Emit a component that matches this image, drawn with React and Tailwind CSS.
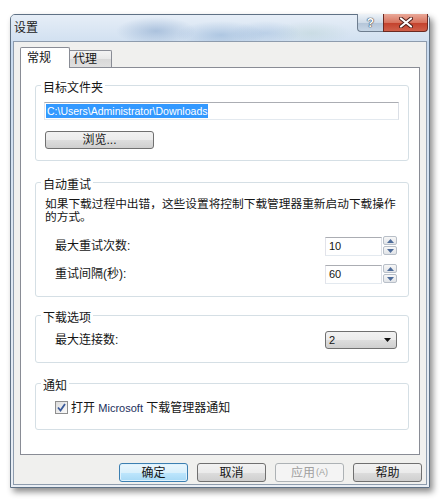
import React from "react";

function Group({ label, className, children }) {
  return (
    <div className={"w-[374px] border border-[#d5dfe5] rounded-[3px] px-[8px] " + className}>
      <div className="-mt-[5px] -ml-[3px] w-fit bg-white px-[2px] leading-[14px]">{label}</div>
      {children}
    </div>
  );
}

function Arrow({ up }) {
  return (
    <svg width="7" height="4" viewBox="0 0 7 4">
      {up ? <path d="M0 4 L3.5 0 L7 4 Z" fill="#4e6c9a" /> : <path d="M0 0 L3.5 4 L7 0 Z" fill="#4e6c9a" />}
    </svg>
  );
}

function Spin({ value }) {
  return (
    <div className="flex items-start h-[20px]">
      <div className="w-[57px] h-[19px] mt-[1px] border border-[#abadb3] border-b-[#e3e9ef] border-l-[#e2e3ea] border-r-[#dbdfe6] bg-white pl-[3px] flex items-center text-[11px] leading-none">
        {value}
      </div>
      <div className="ml-[1px] w-[14px] flex flex-col gap-px">
        <div className="h-[9px] border border-[#b8bfc8] rounded-[2px] bg-[linear-gradient(to_bottom,#f7f7f7,#e1e4e8)] flex items-center justify-center">
          <Arrow up />
        </div>
        <div className="h-[9px] border border-[#b8bfc8] rounded-[2px] bg-[linear-gradient(to_bottom,#f7f7f7,#e1e4e8)] flex items-center justify-center">
          <Arrow />
        </div>
      </div>
    </div>
  );
}

const btn =
  "w-[69px] h-[19px] rounded-[3px] border flex items-center justify-center leading-none text-[12px]";

export default function App() {
  return (
    <div className="w-[443px] h-[500px] bg-white pt-[14px] pl-[10px] font-['Liberation_Sans','Noto_Sans_CJK_SC',sans-serif] text-[12px] text-[#151515]">
      <div className="w-[420px] h-[474px] border border-[#5f7185] rounded-t-[5px] bg-[linear-gradient(to_bottom,#c4d8ee,#dbe6f2_45%,#e9eef4)] shadow-[3px_4px_6px_rgba(0,0,0,0.45)] flex flex-col">
        {/* title bar */}
        <div className="h-[26px] shrink-0 flex items-start justify-between rounded-t-[4px] bg-[radial-gradient(ellipse_40px_14px_at_145px_16px,rgba(95,135,185,0.38),transparent),radial-gradient(ellipse_45px_14px_at_210px_20px,rgba(100,145,195,0.35),transparent),radial-gradient(ellipse_35px_12px_at_255px_18px,rgba(120,160,205,0.3),transparent),radial-gradient(ellipse_40px_12px_at_300px_18px,rgba(160,195,185,0.25),transparent),linear-gradient(to_bottom,#e6eef7,#d2e1f1)]">
          <div className="pl-[3px] pt-[6px] leading-[14px] text-[12px] text-[#222]">设置</div>
          <div className="flex mr-[1px] -mt-[1px]">
            <div className="w-[26px] h-[18px] border border-[#6e7d8f] border-t-0 border-r-0 rounded-bl-[4px] bg-[linear-gradient(to_bottom,#eef3f8,#cfdbe8_50%,#b3c4d7_51%,#c7d6e6)] flex items-center justify-center">
              <span className="text-[12px] font-bold text-white leading-none [text-shadow:0_0_1px_#34404f,0_0_1px_#34404f,0_0_1px_#34404f]">?</span>
            </div>
            <div className="w-[45px] h-[18px] border border-[#6b2a22] border-t-0 rounded-br-[4px] bg-[linear-gradient(to_bottom,#e9a898,#d8745f_50%,#c3402b_51%,#d0604a)] flex items-center justify-center">
              <svg width="14" height="11" viewBox="0 0 14 11">
                <path d="M2 1.5 L12 9.5 M12 1.5 L2 9.5" stroke="#4a1d18" strokeWidth="4" strokeLinecap="round" />
                <path d="M2 1.5 L12 9.5 M12 1.5 L2 9.5" stroke="#ffffff" strokeWidth="2.2" strokeLinecap="round" />
              </svg>
            </div>
          </div>
        </div>

        {/* client */}
        <div className="mx-[2px] w-[414px] h-[444px] shrink-0 border border-[#8e9cad] bg-[#f0f0ee] pt-[5px] flex flex-col">
          {/* tabs */}
          <div className="ml-[6px] h-[20px] flex items-end">
            <div className="relative z-10 w-[50px] h-[21px] -mb-[1px] bg-white border border-b-0 border-[#898c95] rounded-t-[2px] pl-[6px] pt-[3px] leading-[14px]">
              常规
            </div>
            <div className="w-[42px] h-[17px] border border-b-0 border-l-0 border-[#898c95] rounded-tr-[2px] bg-[linear-gradient(to_bottom,#f3f3f3,#e8e8e8_50%,#d8d8d8_51%,#e0e0e0)] pl-[3px] pt-[1px] leading-[14px]">
              代理
            </div>
          </div>

          {/* panel */}
          <div className="ml-[6px] w-[400px] h-[388px] shrink-0 border border-[#898c95] bg-white pt-[17px] pl-[14px]">
            <Group label="目标文件夹" className="pb-[11px]">
              <div className="mt-[7px] w-[355px] h-[18px] border border-[#abadb3] border-b-[#e3e9ef] border-l-[#e2e3ea] border-r-[#dbdfe6] bg-white flex items-center pl-[1px]">
                <span className="bg-[#3399ff] text-white text-[10.5px] leading-[14px] px-[1px]">
                  C:\Users\Administrator\Downloads
                </span>
              </div>
              <div className="mt-[11px] ml-[1px] w-[109px] h-[18px] rounded-[3px] border border-[#707070] bg-[linear-gradient(to_bottom,#f2f2f2_0%,#ebebeb_50%,#dddddd_51%,#cfcfcf_100%)] flex items-center justify-center leading-none">
                浏览...
              </div>
            </Group>

            <Group label="自动重试" className="mt-[21px] pb-[12px]">
              <div className="mt-[5px] text-[11.7px] leading-[13px] pl-[1px] whitespace-nowrap">
                如果下载过程中出错，这些设置将控制下载管理器重新启动下载操作
                <br />
                的方式。
              </div>
              <div className="mt-[13px] h-[20px] flex items-center justify-between pl-[11px] pr-[3px]">
                <span className="leading-[14px]">最大重试次数:</span>
                <Spin value="10" />
              </div>
              <div className="mt-[8px] h-[20px] flex items-center justify-between pl-[11px] pr-[3px]">
                <span className="leading-[14px]">重试间隔(秒):</span>
                <Spin value="60" />
              </div>
            </Group>

            <Group label="下载选项" className="mt-[18px] pb-[13px]">
              <div className="mt-[6px] h-[18px] flex items-center justify-between pl-[11px] pr-[3px]">
                <span className="leading-[14px]">最大连接数:</span>
                <div className="w-[72px] h-[18px] rounded-[3px] border border-[#707070] bg-[linear-gradient(to_bottom,#f2f2f2_0%,#ebebeb_50%,#dddddd_51%,#cfcfcf_100%)] flex items-center justify-between pl-[3px] pr-[5px]">
                  <span className="text-[11px] leading-none">2</span>
                  <svg width="7" height="4" viewBox="0 0 7 4">
                    <path d="M0 0 L7 0 L3.5 4 Z" fill="#111" />
                  </svg>
                </div>
              </div>
            </Group>

            <Group label="通知" className="mt-[20px] pb-[15px]">
              <div className="mt-[8px] h-[13px] flex items-center pl-[11px]">
                <div className="w-[13px] h-[13px] border border-[#8f8f8f] bg-[linear-gradient(to_bottom_right,#dcdcdc,#fbfbfb)] flex items-center justify-center">
                  <svg width="9" height="9" viewBox="0 0 9 9">
                    <path d="M1 4.5 L3.5 7.5 L8 1" stroke="#3a5a9a" strokeWidth="1.8" fill="none" />
                  </svg>
                </div>
                <span className="ml-[3px] leading-[14px]">
                  打开 <span className="text-[11px] text-[#1c2f5c]">Microsoft</span> 下载管理器通知
                </span>
              </div>
            </Group>
          </div>

          {/* buttons */}
          <div className="mt-[8px] flex justify-end gap-[9px] pr-[4px]">
            <div className={btn + " border-[#3c7fb1] bg-[linear-gradient(to_bottom,#eaf6fd_0%,#d9f0fc_50%,#bee6fd_51%,#a7d9f5_100%)] shadow-[inset_0_0_0_1px_#dff2fd]"}>
              确定
            </div>
            <div className={btn + " border-[#707070] bg-[linear-gradient(to_bottom,#f2f2f2_0%,#ebebeb_50%,#dddddd_51%,#cfcfcf_100%)]"}>
              取消
            </div>
            <div className={btn + " border-[#adb2b5] bg-[#f4f4f4] text-[#a0a0a0]"}>
              应用<span className="text-[9px] ml-[1px]">(A)</span>
            </div>
            <div className={btn + " border-[#707070] bg-[linear-gradient(to_bottom,#f2f2f2_0%,#ebebeb_50%,#dddddd_51%,#cfcfcf_100%)]"}>
              帮助
            </div>
          </div>
        </div>
      </div>
    </div>
  );
}
